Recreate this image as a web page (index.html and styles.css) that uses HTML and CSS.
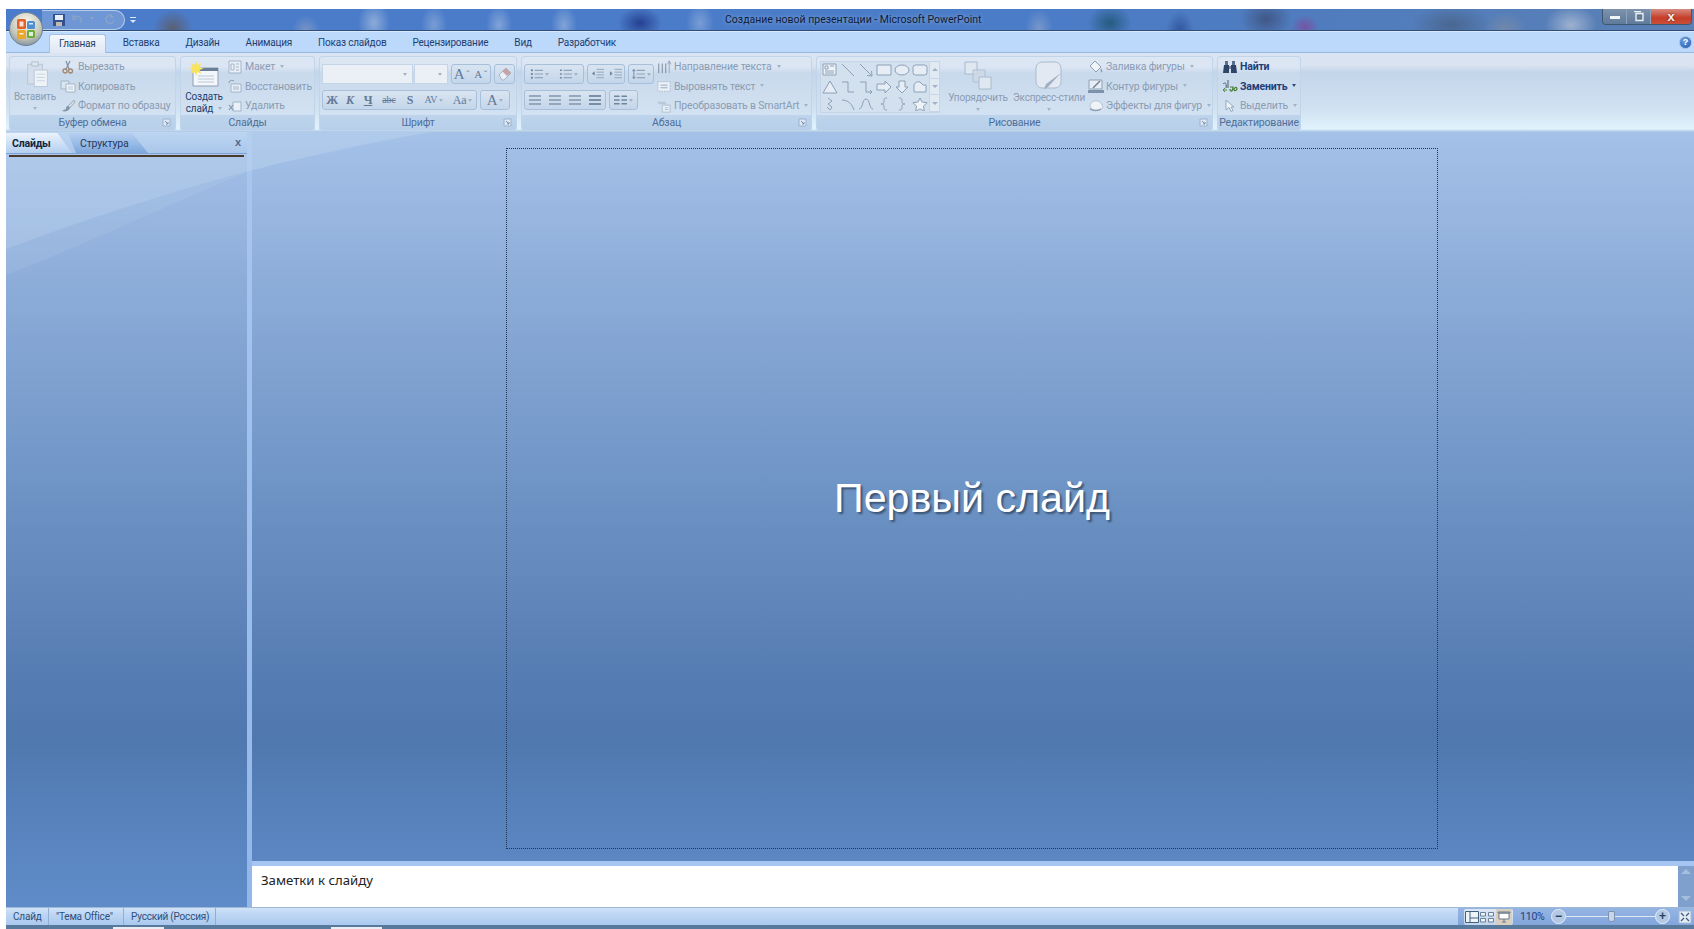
FILE: index.html
```html
<!DOCTYPE html>
<html lang="ru">
<head>
<meta charset="utf-8">
<title>Создание новой презентации - Microsoft PowerPoint</title>
<link rel="stylesheet" href="styles.css">
</head>
<body>
<svg class="defs" width="0" height="0" aria-hidden="true">
  <symbol id="lines" viewBox="0 0 14 12"><path d="M1 2h12M1 6h12M1 10h12" fill="none" stroke="currentColor" stroke-width="1.4"/></symbol>
  <symbol id="launcher" viewBox="0 0 9 9"><path d="M1 1h7v7h-7z" fill="#dce8f6" stroke="#9db2cc"/><path d="M3 3l3 3M6 4v2h-2" fill="none" stroke="#7d93ae"/></symbol>
</svg>

<div class="window">
  <header class="titlebar">
    <div class="orb">
      <svg viewBox="0 0 34 34" width="34" height="34">
        <defs>
          <radialGradient id="orbFill" cx="50%" cy="30%" r="70%"><stop offset="0" stop-color="#fbf8ef"/><stop offset=".65" stop-color="#c9cabb"/><stop offset="1" stop-color="#8a979e"/></radialGradient>
        </defs>
        <circle cx="17" cy="17" r="16.500" fill="url(#orbFill)" stroke="#6b8196"/>
        <rect x="8" y="7" width="9" height="10" rx="1.500" fill="#e2622a"/>
        <rect x="18" y="9" width="8" height="8" rx="1.500" fill="#4f8fd0"/>
        <rect x="8" y="18" width="9" height="9" rx="1.500" fill="#eba72b"/>
        <rect x="18" y="18" width="8" height="8" rx="1.500" fill="#6fae3c"/>
        <path d="M10.500 9.500h4v5h-4zM20 20h4v4h-4zM20 11h4v1.500h-4zM10.500 21h4v1.500h-4z" fill="#fff" opacity=".8"/>
      </svg>
    </div>
    <div class="qat">
      <svg viewBox="0 0 12 12" width="12" height="12"><path d="M0 0h12v12h-12z" fill="#33508f"/><path d="M2 1h8v5h-8z" fill="#e6eef8"/><path d="M3 8h6v4h-6z" fill="#c4b9b0"/></svg>
      <svg class="qat-undo" viewBox="0 0 12 12" width="12" height="12"><path d="M3 3c4-2 8 0 7 6M2 1v4h4" fill="none" stroke="#8aa4c8" stroke-width="1.400"/></svg>
      <span class="qat-caret"></span>
      <svg class="qat-redo" viewBox="0 0 12 12" width="12" height="12"><path d="M10 6a4 4 0 1 1-2-4M7 0v3h3" fill="none" stroke="#8aa4c8" stroke-width="1.400"/></svg>
    </div>
    <span class="qat-more"></span>
    <h1 class="doc-title">Создание новой презентации - Microsoft PowerPoint</h1>
    <div class="win-buttons">
      <span class="win-btn win-min"><i></i></span>
      <span class="win-btn win-max"><svg viewBox="0 0 11 11" width="11" height="11"><path d="M3 2.500h7v7h-7z M1 .5h7" fill="none" stroke="#e8eef5" stroke-width="1.400"/><path d="M5 4.500h3v3h-3z" fill="none" stroke="#5d7084"/></svg></span>
      <span class="win-btn win-close">x</span>
    </div>
  </header>

  <nav class="tabs">
    <span class="tab tab-active">Главная</span>
    <span class="tab">Вставка</span>
    <span class="tab">Дизайн</span>
    <span class="tab">Анимация</span>
    <span class="tab">Показ слайдов</span>
    <span class="tab">Рецензирование</span>
    <span class="tab">Вид</span>
    <span class="tab">Разработчик</span>
    <span class="help">?</span>
  </nav>

  <section class="ribbon">
    <div class="group g-clip">
      <div class="group-body">
        <div class="big big-paste">
          <svg viewBox="0 0 30 34" width="25" height="28"><path d="M3 4h18v24h-18z" fill="#d5dfeb" stroke="#b3c2d4"/><path d="M8 1h8v5h-8z" fill="#dde5ee" stroke="#aab9cb"/><path d="M11 11h16v20h-16z" fill="#eef3f8" stroke="#b3c2d4"/><path d="M14 16h10M14 20h10M14 24h10" stroke="#c3cfdd"/></svg>
          <span class="big-label">Вставить</span>
          <span class="caret"></span>
        </div>
        <div class="rows">
          <div class="row"><svg viewBox="0 0 14 14"><path d="M5 1l3 8M9 1l-4 8" stroke="#8494a8" stroke-width="1.300" fill="none"/><circle cx="4" cy="11" r="2" fill="none" stroke="#a2876f" stroke-width="1.300"/><circle cx="9.500" cy="11" r="2" fill="none" stroke="#a2876f" stroke-width="1.300"/></svg><span>Вырезать</span></div>
          <div class="row"><svg viewBox="0 0 16 14"><path d="M1 2h8v8h-8z" fill="#dbe5f0" stroke="#a3b4c8"/><path d="M6 5h9v8h-9z" fill="#eff4f9" stroke="#a3b4c8"/><path d="M8 8h5M8 10h5" stroke="#b9c6d6"/></svg><span>Копировать</span></div>
          <div class="row"><svg viewBox="0 0 16 14"><path d="M14 1l-6 6 2 2 5-6z" fill="#d2dbe6" stroke="#9dacbf"/><path d="M8 7c-2 0-2 2-2 3l-4 2c3 1 7 0 8-3z" fill="#8494a8"/></svg><span>Формат по образцу</span></div>
        </div>
      </div>
      <div class="group-label">Буфер обмена<svg class="launch" viewBox="0 0 9 9"><use href="#launcher"/></svg></div>
    </div>

    <div class="group g-slides">
      <div class="group-body">
        <div class="big big-new">
          <svg viewBox="0 0 30 26" width="30" height="26"><path d="M4 7h25v18h-25z" fill="#f3f6fa" stroke="#8f9fb2"/><path d="M4 7h25v3h-25z" fill="#6a7f96"/><path d="M9 15h16M9 18h16M9 21h16" stroke="#bcc9d8"/><path d="M7 0l1.500 4 4-2-2 4 4 1.500-4 1.500 2 4-4-2-1.500 4-1.500-4-4 2 2-4-3-1.500 3-1.500-2-4 4 2z" fill="#f7e45c"/></svg>
          <span class="big-label strong">Создать<br>слайд<i class="caret inline"></i></span>
        </div>
        <div class="rows">
          <div class="row"><svg viewBox="0 0 14 14"><path d="M1 1h12v12h-12z" fill="#eaf0f7" stroke="#a3b4c8"/><path d="M3 4h3v6h-3zM8 4h3M8 7h3M8 10h3" fill="none" stroke="#a3b4c8"/></svg><span>Макет<i class="caret inline"></i></span></div>
          <div class="row"><svg viewBox="0 0 14 14"><path d="M3 5h10v8h-10z" fill="#eaf0f7" stroke="#a3b4c8"/><path d="M5 8h6M5 10h6" stroke="#a3b4c8"/><path d="M1 4c0-3 3-3 5-2" fill="none" stroke="#8494a8"/></svg><span>Восстановить</span></div>
          <div class="row"><svg viewBox="0 0 14 14"><path d="M5 3h8v9h-8z" fill="#eaf0f7" stroke="#a3b4c8"/><path d="M1 6l4 5M5 6l-4 5" stroke="#8494a8" stroke-width="1.200"/></svg><span>Удалить</span></div>
        </div>
      </div>
      <div class="group-label">Слайды</div>
    </div>

    <div class="group g-font">
      <div class="group-body stack">
        <div class="tool-row">
          <span class="combo c-font"><i class="caret"></i></span>
          <span class="combo c-size"><i class="caret"></i></span>
          <span class="btn-set">
            <span class="tool f-serif wide">A<sup>ˆ</sup></span><span class="tool f-serif small wide">A<sup>ˇ</sup></span>
          </span>
          <span class="btn-set">
            <span class="tool tight"><svg viewBox="0 0 16 14" width="16" height="14"><path d="M2 8l7-7 5 5-7 7H5z" fill="#eaf0f7" stroke="#a3b4c8"/><path d="M9 1l5 5-4 3-5-5z" fill="#c7a3a8"/></svg></span>
          </span>
        </div>
        <div class="tool-row">
          <span class="btn-set">
            <span class="tool f-serif bold">Ж</span><span class="tool f-serif ital">К</span><span class="tool f-serif under">Ч</span><span class="tool f-serif strike">abc</span><span class="tool f-serif bold">S</span><span class="tool f-serif spacing">AV<i class="caret"></i></span><span class="tool f-serif aa">Aa<i class="caret"></i></span>
          </span>
          <span class="btn-set">
            <span class="tool f-serif color">A<i class="caret"></i></span>
          </span>
        </div>
      </div>
      <div class="group-label">Шрифт<svg class="launch" viewBox="0 0 9 9"><use href="#launcher"/></svg></div>
    </div>

    <div class="group g-para">
      <div class="group-body">
        <div class="stack">
          <div class="tool-row">
            <span class="btn-set">
              <span class="tool list"><svg viewBox="0 0 14 12" width="13" height="12"><path d="M5 2h9M5 6h9M5 10h9" stroke="#8fa3bb" stroke-width="1.300"/><path d="M1 2h2M1 6h2M1 10h2" stroke="#6d879f" stroke-width="2"/></svg><i class="caret"></i></span>
              <span class="tool list"><svg viewBox="0 0 14 12" width="13" height="12"><path d="M5 2h9M5 6h9M5 10h9" stroke="#8fa3bb" stroke-width="1.300"/><path d="M1 2h2M1 6h2M1 10h2" stroke="#6d879f" stroke-width="1.500"/></svg><i class="caret"></i></span>
            </span>
            <span class="btn-set">
              <span class="tool indent"><svg viewBox="0 0 14 12" width="13" height="12"><path d="M6 1h8M6 4h8M6 7h8M6 10h8" stroke="#8fa3bb"/><path d="M4 3L1 5.500 4 8z" fill="#6d879f"/></svg></span>
              <span class="tool indent"><svg viewBox="0 0 14 12" width="13" height="12"><path d="M6 1h8M6 4h8M6 7h8M6 10h8" stroke="#8fa3bb"/><path d="M1 3l3 2.500-3 2.500z" fill="#6d879f"/></svg></span>
            </span>
            <span class="btn-set">
              <span class="tool list-s"><svg viewBox="0 0 14 12" width="13" height="12"><path d="M5 2h9M5 6h9M5 10h9" stroke="#8fa3bb" stroke-width="1.300"/><path d="M2 1v10M.5 3L2 1l1.500 2M.5 9L2 11l1.500-2" fill="none" stroke="#6d879f"/></svg><i class="caret"></i></span>
            </span>
          </div>
          <div class="tool-row">
            <span class="btn-set">
              <span class="tool align"><svg width="14" height="12" class="glyph-soft"><use href="#lines"/></svg></span>
              <span class="tool align"><svg width="14" height="12" class="glyph-soft"><use href="#lines"/></svg></span>
              <span class="tool align"><svg width="14" height="12" class="glyph-soft"><use href="#lines"/></svg></span>
              <span class="tool align"><svg width="14" height="12" class="glyph-dark"><use href="#lines"/></svg></span>
            </span>
            <span class="btn-set">
              <span class="tool cols"><svg viewBox="0 0 14 12" width="13" height="12"><path d="M0 2h6M0 6h6M0 10h6M8 2h6M8 6h6M8 10h6" stroke="#6d879f" stroke-width="1.500"/></svg><i class="caret"></i></span>
            </span>
          </div>
        </div>
        <div class="rows rows-tight">
          <div class="row"><svg viewBox="0 0 16 16"><path d="M2 4v11M6 4v11M10 4v11" stroke="#6d7f95" fill="none"/><path d="M14 1l-2 4M14 1l2 4M14 1v14" stroke="#8fa3bb" fill="none"/></svg><span>Направление текста<i class="caret inline"></i></span></div>
          <div class="row"><svg viewBox="0 0 16 16"><path d="M1 3h14v11h-14z" fill="#eaf0f7" stroke="#a9bacd" stroke-dasharray="2 1"/><path d="M4 7h8M4 10h8" stroke="#8fa3bb"/></svg><span>Выровнять текст<i class="caret inline"></i></span></div>
          <div class="row"><svg viewBox="0 0 16 16"><path d="M0 3h9l2 3H2z" fill="#b9c7d8"/><path d="M6 7h9v8H6z" fill="#eaf0f7" stroke="#a9bacd"/><path d="M9 10h4M9 12h4" stroke="#a9bacd"/></svg><span>Преобразовать в SmartArt<i class="caret inline"></i></span></div>
        </div>
      </div>
      <div class="group-label">Абзац<svg class="launch" viewBox="0 0 9 9"><use href="#launcher"/></svg></div>
    </div>

    <div class="group g-draw">
      <div class="group-body">
        <div class="gallery">
          <div class="shapes">
            <svg viewBox="0 0 16 14"><path d="M1 1h13v11H1z" fill="#eef3f8"/><path d="M3 3h3v3H3zM8 3h4M3 8h9M3 10h9" fill="none"/></svg>
            <svg viewBox="0 0 16 14"><path d="M2 1l12 12"/></svg>
            <svg viewBox="0 0 16 14"><path d="M2 1l12 12M9 12.500l5 .5-.5-5" /></svg>
            <svg viewBox="0 0 16 14"><path d="M1 2h14v10H1z" fill="#e6edf5"/></svg>
            <svg viewBox="0 0 16 14"><ellipse cx="8" cy="7" rx="7" ry="5" fill="#e6edf5"/></svg>
            <svg viewBox="0 0 16 14"><rect x="1" y="2" width="14" height="10" rx="2.500" fill="#e6edf5"/></svg>
            <svg viewBox="0 0 16 14"><path d="M8 1l7 12H1z" fill="#e6edf5"/></svg>
            <svg viewBox="0 0 16 14"><path d="M2 2h6v10h6"/></svg>
            <svg viewBox="0 0 16 14"><path d="M2 2h6v10h6M12 10l2 2-2 2"/></svg>
            <svg viewBox="0 0 16 14"><path d="M1 4h8V1l6 6-6 6v-3H1z" fill="#e6edf5"/></svg>
            <svg viewBox="0 0 16 14"><path d="M5 1h6v6h3l-6 6-6-6h3z" fill="#e6edf5"/></svg>
            <svg viewBox="0 0 16 14"><path d="M2 12V6c0-3 3-5 6-4l3 3h3v7z" fill="#e6edf5"/></svg>
            <svg viewBox="0 0 16 14"><path d="M6 1l4 3-4 3 4 3-2 3-3-3"/></svg>
            <svg viewBox="0 0 16 14"><path d="M2 3c6 0 10 4 12 10"/></svg>
            <svg viewBox="0 0 16 14"><path d="M1 12C5 12 4 2 8 2s3 10 7 10"/></svg>
            <svg viewBox="0 0 16 14"><path d="M11 1c-3 0-3 1-3 3s0 3-3 3c3 0 3 1 3 3s0 3 3 3"/></svg>
            <svg viewBox="0 0 16 14"><path d="M5 1c3 0 3 1 3 3s0 3 3 3c-3 0-3 1-3 3s0 3-3 3"/></svg>
            <svg viewBox="0 0 16 14"><path d="M8 1l2 4 5 .7-3.500 3.500.8 5L8 12l-4.300 2.200.8-5L1 5.700 6 5z" fill="#eef3f8"/></svg>
          </div>
          <div class="gallery-scroll"><i class="up"></i><i class="down"></i><i class="more"></i></div>
        </div>
        <div class="big big-arrange">
          <svg viewBox="0 0 28 30" width="28" height="30"><path d="M1 1h12v12H1z" fill="#dfe7f1" stroke="#a9bacd"/><path d="M9 9h12v12H9z" fill="#ced9e7" stroke="#a9bacd" opacity=".8"/><path d="M15 16h12v12H15z" fill="#dfe7f1" stroke="#a9bacd"/></svg>
          <span class="big-label">Упорядочить</span>
          <span class="caret"></span>
        </div>
        <div class="big big-styles">
          <svg viewBox="0 0 28 30" width="28" height="30"><rect x="1" y="1" width="25" height="26" rx="6" fill="#e2e9f2" stroke="#aabbcd"/><path d="M26 12L12 27l-3 1 2-5z" fill="#a0afc2"/></svg>
          <span class="big-label">Экспресс-стили</span>
          <span class="caret"></span>
        </div>
        <div class="rows rows-tight">
          <div class="row"><svg viewBox="0 0 16 14"><path d="M7 1l6 6-5 5-6-6z" fill="#f0f4f8" stroke="#8fa0b4"/><path d="M13 8c1 2 2 3 1 4s-2-1-1-4z" fill="#8fa0b4"/></svg><span>Заливка фигуры<i class="caret inline"></i></span></div>
          <div class="row"><svg viewBox="0 0 16 14"><path d="M1 1h13v9H1z" fill="#e6edf5" stroke="#8fa0b4"/><path d="M5 9l7-7" stroke="#6f8196" stroke-width="1.500"/><path d="M0 11h16v3H0z" fill="#7d92ab"/></svg><span>Контур фигуры<i class="caret inline"></i></span></div>
          <div class="row"><svg viewBox="0 0 16 14"><path d="M3 9a5 4 0 0 1 10-5l2 4c-3 4-9 5-12 1z" fill="#eef3f8" stroke="#b4c2d2"/><path d="M2 10c3 2 8 2 11 0" stroke="#8a9bb0" stroke-width="1.500" fill="none"/></svg><span>Эффекты для фигур<i class="caret inline"></i></span></div>
        </div>
      </div>
      <div class="group-label">Рисование<svg class="launch" viewBox="0 0 9 9"><use href="#launcher"/></svg></div>
    </div>

    <div class="group g-edit">
      <div class="group-body">
        <div class="rows rows-edit">
          <div class="row on"><svg viewBox="0 0 16 14"><path d="M3 1h3v4H3zM10 1h3v4h-3z" fill="#5c6f8a"/><path d="M2 5h5v8H1zM9 5h5l1 8H9z" fill="#2e4468"/><path d="M7 6h2v3H7z" fill="#7d8ea5"/></svg><span>Найти</span></div>
          <div class="row on"><svg viewBox="0 0 16 14"><path d="M1 5c2-2 4-1 3 4M6 1v8" fill="none" stroke="#4a5a70"/><path d="M1 11h4M3 9l-2 2 2 2" fill="none" stroke="#4a8c3a"/><path d="M8 8h3c0 5-3 5-3 2M12 10c2-3 3-1 3 0s-3 3-3 0" fill="none" stroke="#3f7d32" stroke-width="1.200"/></svg><span>Заменить<i class="caret inline dark"></i></span></div>
          <div class="row"><svg viewBox="0 0 16 14"><path d="M4 1v10l3-2.500 2 4 2-1-2-3.500h3z" fill="#eef3f8" stroke="#95a7bc"/></svg><span>Выделить<i class="caret inline"></i></span></div>
        </div>
      </div>
      <div class="group-label">Редактирование</div>
    </div>
  </section>

  <main class="workspace">
    <svg class="swoosh" viewBox="0 0 1000 200" width="1000" height="200">
      <path d="M0 0H425C330 15 290 27 241 40C160 74 97 105 0 143z" fill="#c8dcf4" opacity=".14"/>
      <path d="M0 0H425C340 16 290 27 235 41C166 60 97 81 0 117z" fill="#c8dcf4" opacity=".26"/>
    </svg>
    <aside class="side-pane">
      <div class="pane-tabs">
        <span class="pane-tab pane-tab-on">Слайды</span>
        <span class="pane-tab pane-tab-off">Структура</span>
        <span class="pane-close">x</span>
      </div>
      <div class="pane-rule"></div>
    </aside>
    <div class="splitter"></div>
    <div class="editor">
      <div class="slide-area">
        <div class="slide"><span class="slide-title">Первый слайд</span></div>
      </div>
      <div class="notes">
        <div class="notes-text">Заметки к слайду</div>
        <div class="notes-scroll"><i class="up"></i><i class="down"></i></div>
      </div>
    </div>
  </main>

  <footer class="status">
    <span class="status-cell c1">Слайд</span>
    <span class="status-cell c2">"Тема Office"</span>
    <span class="status-cell c3">Русский (Россия)</span>
    <div class="status-right">
      <div class="views">
        <svg viewBox="0 0 14 12" width="14" height="12"><path d="M.5.500h13v11H.5z" fill="#eef3f8" stroke="#44607f" stroke-width="1"/><path d="M5 .5v11M5 7h8" stroke="#44607f"/></svg>
        <svg viewBox="0 0 14 12" width="14" height="12"><path d="M.5 1.500h5v3.500h-5zM8.500 1.500h5v3.500h-5zM.5 7.500h5v3.500h-5zM8.500 7.500h5v3.500h-5z" fill="#eef3f8" stroke="#6a8098"/></svg>
        <span class="view-on"><svg viewBox="0 0 14 12" width="14" height="12"><path d="M1 1h12v1H1zM2 2h10v6H2z" fill="#fff" stroke="#6a7a88"/><path d="M7 8v3M5 11h4" stroke="#6a7a88"/></svg></span>
      </div>
      <span class="zoom-pct">110%</span>
      <span class="zoom-btn">−</span>
      <span class="zoom-track"><i class="zoom-thumb"></i></span>
      <span class="zoom-btn">+</span>
      <span class="fit"><svg viewBox="0 0 14 14" width="14" height="14"><path d="M1 1h12v12H1z" fill="#e4ecf6" stroke="#a8bdd6"/><path d="M3 3l3 3M11 3L8 6M3 11l3-3M11 11L8 8" stroke="#445f80" stroke-width="1.400"/></svg></span>
    </div>
  </footer>
  <div class="task-strip"><i class="s1"></i><i class="s2"></i></div>
</div>
</body>
</html>
```

FILE: styles.css
```css
* { box-sizing: border-box; }
html, body { margin: 0; height: 100%; }
body {
  width: 1694px;
  height: 929px;
  padding: 9px 0 0 6px;
  background: #fff;
  overflow: hidden;
  font: 10.5px Roboto, "Noto Sans", "Liberation Sans", sans-serif;
  letter-spacing: -.18px;
  color: #8a9cb3;
}
.defs { position: absolute; }
i { font-style: normal; }

.window { display: flex; flex-direction: column; height: 920px; position: relative; }

/* Title bar: glass frame with the blurred desktop showing through */
.titlebar {
  height: 22px;
  flex: none;
  display: flex;
  align-items: center;
  position: relative;
  background:
    radial-gradient(ellipse 20px 20px at 167px 20px, rgba(95,85,85,.75), transparent),
    radial-gradient(ellipse 14px 16px at 300px 22px, rgba(140,160,195,.7), transparent),
    radial-gradient(ellipse 16px 22px at 368px 14px, rgba(175,195,225,.65), transparent),
    radial-gradient(ellipse 13px 20px at 428px 16px, rgba(160,185,220,.55), transparent),
    radial-gradient(ellipse 13px 20px at 493px 16px, rgba(165,190,225,.6), transparent),
    radial-gradient(ellipse 13px 20px at 558px 16px, rgba(165,190,225,.6), transparent),
    radial-gradient(ellipse 22px 16px at 634px 14px, rgba(25,45,125,.75), transparent),
    radial-gradient(ellipse 14px 20px at 694px 14px, rgba(165,190,225,.5), transparent),
    radial-gradient(ellipse 14px 20px at 1033px 20px, rgba(150,170,205,.6), transparent),
    radial-gradient(ellipse 22px 18px at 1104px 14px, rgba(25,80,105,.75), transparent),
    radial-gradient(ellipse 14px 20px at 1174px 22px, rgba(30,60,130,.6), transparent),
    radial-gradient(ellipse 26px 20px at 1260px 10px, rgba(60,75,115,.75), transparent),
    radial-gradient(ellipse 14px 12px at 1299px 18px, rgba(150,50,140,.55), transparent),
    radial-gradient(ellipse 40px 20px at 1445px 16px, rgba(70,95,130,.75), transparent),
    radial-gradient(ellipse 22px 18px at 1499px 20px, rgba(125,140,165,.7), transparent),
    radial-gradient(ellipse 26px 20px at 1565px 16px, rgba(175,190,215,.8), transparent),
    linear-gradient(90deg, #4b7ccb, #4b7cc8 60%, #4f7cc0 75%, #5a80b4);
  border-bottom: 1px solid #2f4d77;
}
.orb {
  position: absolute;
  left: 3px;
  top: 3px;
  z-index: 3;
  width: 34px;
  height: 34px;
}
.qat {
  margin-left: 36px;
  height: 20px;
  width: 83px;
  display: flex;
  align-items: center;
  padding-left: 11px;
  background: rgba(205, 222, 245, .28);
  border: 1px solid #b6cbe6;
  border-left: 0;
  border-radius: 0 11px 11px 0;
}
.qat-undo { margin-left: 6px; }
.qat-caret { width: 0; height: 0; margin: 0 7px; border: 2px solid transparent; border-top: 3px solid #8aa4c8; }
.qat-redo { margin-left: 3px; }
.qat-more { margin-left: 5px; width: 6px; height: 5px; border-top: 1px solid #dce7f5; position: relative; }
.qat-more::after { content: ""; position: absolute; left: 0; top: 2px; border: 3px solid transparent; border-top-color: #dce7f5; }
.doc-title {
  position: absolute;
  left: 719px;
  top: 3px;
  margin: 0;
  font: 400 10.500px/16px Roboto, "Noto Sans", sans-serif;
  letter-spacing: 0;
  color: #0d1d38;
  text-shadow: 0 0 4px rgba(255,255,255,.4);
  white-space: nowrap;
}
.win-buttons {
  margin-left: auto;
  margin-right: 2px;
  align-self: flex-start;
  display: flex;
  height: 16px;
  border: 1px solid #3f5670;
  border-top: 0;
  border-radius: 0 0 4px 4px;
  overflow: hidden;
}
.win-btn { display: flex; align-items: center; justify-content: center; height: 100%; }
.win-min, .win-max { width: 24px; background: linear-gradient(#7d92ac, #5f7a9a); border-right: 1px solid #8ea3bd; }
.win-min i { width: 10px; height: 3px; background: #f0f4f8; margin-top: 2px; }
.win-close {
  width: 40px;
  background: linear-gradient(#d68b80, #c63c28 60%, #c85038);
  color: #f0f0ee;
  font: 700 13px/12px "Liberation Sans", sans-serif;
  text-shadow: 0 0 2px #6a2015;
}

/* Ribbon tabs */
.tabs {
  height: 21px;
  flex: none;
  display: flex;
  align-items: flex-end;
  padding-left: 39px;
  background: #bcd8fa;
  position: relative;
  border-top: 1px solid #d9e9fd;
  font-size: 10px;
  letter-spacing: -.2px;
}
.tab {
  height: 19px;
  padding: 0 13px;
  line-height: 20px;
  color: #1e3f72;
  white-space: nowrap;
}
.tab-active {
  margin: 0 4px;
  padding: 0 9px;
  color: #243f66;
  background: linear-gradient(#f4f8fd, #dfe7f3);
  border: 1px solid #a6c2e4;
  border-bottom: 0;
  border-radius: 3px 3px 0 0;
  line-height: 18px;
  position: relative;
  top: 1px;
}
.help {
  position: absolute;
  right: 2px;
  top: 4px;
  width: 13px;
  height: 13px;
  border-radius: 50%;
  background: radial-gradient(circle at 40% 30%, #6fa3e8, #1c56a8);
  border: 1px solid #9fbde2;
  color: #fff;
  font: 700 9px/11px "Liberation Sans", sans-serif;
  text-align: center;
}

/* Ribbon body */
.ribbon {
  height: 80px;
  flex: none;
  display: flex;
  gap: 4px;
  padding: 3px 0 1px 3px;
  background: linear-gradient(#dbe4f2 0, #d9e3f1 16%, #c3d5ea 24%, #d0e1f2 70%, #e0f3fb 96%, #a9c4e4 100%);
  border-top: 1px solid #97b7de;
}
.group {
  display: flex;
  flex-direction: column;
  border: 1px solid #c0d4ea;
  border-radius: 3px;
  background: linear-gradient(#dde6f3 0, #dbe5f3 14%, #c8d9ec 22%, #d3e2f2 80%);
  overflow: hidden;
}
.group-body { flex: 1; display: flex; min-height: 0; }
.group-label {
  height: 15px;
  flex: none;
  position: relative;
  text-align: center;
  line-height: 16px;
  color: #4f6f99;
  background: linear-gradient(#bed4ec, #b7cfea);
}
.launch { position: absolute; right: 4px; top: 3px; width: 9px; height: 9px; }
.g-clip { width: 167px; }
.g-slides { width: 135px; }
.g-font { width: 198px; }
.g-para { width: 291px; }
.g-draw { width: 397px; }
.g-edit { width: 84px; }

.big {
  flex: none;
  display: flex;
  flex-direction: column;
  align-items: center;
  padding-top: 4px;
  line-height: 12px;
  white-space: nowrap;
}
.big-label { text-align: center; font-size: 10px; }
.big-paste { width: 50px; }
.big-paste .big-label { margin-top: 2px; }
.big-paste svg { margin-left: 4px; }
.big-new { width: 46px; }
.big-new svg { margin-bottom: 4px; }
.big-label.strong { color: #21416f; line-height: 12px; }
.big-arrange { width: 68px; margin-left: 4px; }
.big-styles { width: 74px; }
.big-arrange .big-label, .big-styles .big-label { margin-top: 1px; }
.big .caret { margin-top: 4px; }

.caret {
  display: inline-block;
  width: 0;
  height: 0;
  border: 2.500px solid transparent;
  border-top: 3px solid #a3b3c6;
  border-bottom: 0;
}
.caret.inline { margin: 0 0 2px 5px; vertical-align: middle; }
.caret.dark { border-top-color: #2d4b78; }

.rows {
  display: flex;
  flex-direction: column;
  white-space: nowrap;
}
.row { display: flex; align-items: center; gap: 2px; height: 19.500px; flex: none; }
.row svg { flex: none; width: 16px; height: 14px; }
.rows-tight { margin-left: 2px; }
.rows-edit { padding-left: 4px; }
.row.on { color: #1f3f78; font-weight: 700; }

/* Font and paragraph tool rows */
.stack { display: flex; flex-direction: column; gap: 6px; padding: 7px 0 0 2px; }
.tool-row { display: flex; gap: 3px; height: 20px; flex: none; }
.combo {
  height: 20px;
  background: #ebf0f6;
  border: 1px solid #c5d5e8;
  position: relative;
}
.combo .caret { position: absolute; right: 5px; top: 8px; }
.c-font { width: 91px; }
.c-size { width: 34px; margin-left: -2px; }
.btn-set {
  display: flex;
  height: 20px;
  border: 1px solid #a8bfda;
  border-radius: 3px;
  background: linear-gradient(#d9e4f1, #c4d6ea);
  overflow: hidden;
}
.tool {
  height: 100%;
  min-width: 18px;
  display: flex;
  align-items: center;
  justify-content: center;
  gap: 2px;
  color: #627a98;
}
.f-serif { font: 700 12px/1 "Liberation Serif", serif; }
.f-serif sup { font-size: 9px; line-height: 0; }
.tool.wide { width: 19px; font-size: 15px; font-weight: 400; }
.tool.small { font-size: 11px; }
.tool.tight { width: 19px; }
.tool.ital { font-style: italic; }
.tool.under { text-decoration: underline; }
.tool.strike { font-size: 10px; text-decoration: line-through; font-weight: 400; width: 24px; }
.tool.spacing { width: 30px; font-size: 10px; font-weight: 400; }
.tool.aa { width: 27px; font-weight: 400; }
.tool.color { width: 28px; font-size: 15px; font-weight: 400; }
.tool.list { width: 29px; }
.tool.indent { width: 18px; }
.tool.list-s { width: 24px; }
.tool.align { width: 20px; }
.tool.cols { width: 27px; }
.tool .caret { flex: none; }
.glyph-soft { color: #8195ad; }
.glyph-dark { color: #5d7590; }

/* Shape gallery */
.gallery {
  flex: none;
  width: 120px;
  height: 52px;
  margin: 4px 0 0 3px;
  display: flex;
  background: #d3e0ee;
  border: 1px solid #c6d6e8;
}
.shapes { flex: 1; display: grid; grid-template-columns: repeat(6, 18px); grid-auto-rows: 17px; }
.shapes svg { width: 16px; height: 14px; margin: 1px; fill: none; stroke: #8ba0b8; stroke-width: 1; }
.gallery-scroll { width: 11px; display: flex; flex-direction: column; border-left: 1px solid #c6d6e8; }
.gallery-scroll i {
  flex: 1;
  background: #e1e9f3;
  border-bottom: 1px solid #c6d6e8;
  display: flex;
  align-items: center;
  justify-content: center;
}
.gallery-scroll i::after, .notes-scroll i::after {
  content: "";
  width: 0;
  height: 0;
  border: 3px solid transparent;
}
.gallery-scroll .up::after { border-bottom: 3px solid #9fb2c8; border-top: 0; }
.gallery-scroll .down::after, .gallery-scroll .more::after { border-top: 3px solid #9fb2c8; border-bottom: 0; }

/* Workspace */
.workspace {
  flex: 1;
  min-height: 0;
  display: flex;
  position: relative;
  background: linear-gradient(#a4c1e8 0, #8aaad7 22%, #6c92c4 48%, #5a80b6 66%, #4f78ae 78%, #5a85c0 92%, #5f8cc8 100%);
  overflow: hidden;
}
.swoosh { position: absolute; left: 0; top: 0; }
.side-pane { width: 241px; flex: none; position: relative; }
.pane-tabs {
  height: 22px;
  display: flex;
  align-items: flex-end;
  background: linear-gradient(rgba(190,214,243,.9), rgba(167,197,234,.6));
  border-bottom: 1px solid #7ea4d6;
  position: relative;
}
.pane-tab {
  height: 20px;
  line-height: 21px;
  color: #1f2f45;
  white-space: nowrap;
}
.pane-tab-on {
  width: 66px;
  padding-left: 6px;
  font-weight: 700;
  color: #10253f;
  background: linear-gradient(#eaf2fc, #b4cff0);
  clip-path: polygon(0 0, 78% 0, 100% 100%, 0 100%);
  position: relative;
  z-index: 1;
}
.pane-tab-off {
  width: 80px;
  margin-left: -4px;
  padding-left: 12px;
  color: #1e3a64;
  background: linear-gradient(#b5cff0, #7ea8dc);
  clip-path: polygon(0 0, 80% 0, 100% 100%, 10% 100%);
}
.pane-close { position: absolute; right: 6px; top: 3px; font: 700 11px/14px "Liberation Sans", sans-serif; color: #4f6b90; }
.pane-rule { height: 2px; margin: 1px 3px 0; background: #4a3a2e; }
.splitter { width: 5px; flex: none; background: linear-gradient(#a9c6ef, #93b7ea); }
.editor { flex: 1; min-width: 0; display: flex; flex-direction: column; position: relative; }
.slide-area { flex: 1; min-height: 0; padding: 16px 0 12px 254px; }
.slide {
  width: 932px;
  height: 100%;
  border: 1px dotted #22344e;
  display: flex;
  align-items: center;
  justify-content: center;
}
.slide-title {
  font: 41.200px/1 "Liberation Sans", sans-serif;
  letter-spacing: 0;
  color: #fff;
  text-shadow: 2px 2px 2px rgba(25, 40, 60, .6);
}
.notes {
  height: 46px;
  flex: none;
  display: flex;
  border-top: 5px solid #a5c6f2;
  background: #fff;
}
.notes-text { flex: 1; padding: 4px 0 0 9px; font: 13.200px/20px "Noto Sans", sans-serif; letter-spacing: 0; color: #222; }
.notes-scroll {
  width: 16px;
  flex: none;
  display: flex;
  flex-direction: column;
  justify-content: space-between;
  padding: 3px 0;
  background: #7f9fcd;
}
.notes-scroll i { display: flex; justify-content: center; height: 8px; }
.notes-scroll .up::after { border-bottom: 5px solid #a5bedd; border-top: 0; border-left-width: 5px; border-right-width: 5px; }
.notes-scroll .down::after { border-top: 5px solid #a5bedd; border-bottom: 0; border-left-width: 5px; border-right-width: 5px; }

/* Status bar */
.status {
  height: 18px;
  flex: none;
  display: flex;
  align-items: center;
  background: linear-gradient(#d0e2f8, #bcd5f3 40%, #abc9ef);
  border-top: 1px solid #9fb8d6;
  color: #2f4f7c;
  font-size: 10px;
  letter-spacing: -.2px;
  white-space: nowrap;
}
.status-cell { height: 100%; line-height: 18px; padding-left: 7px; border-right: 1px solid #94aed0; }
.c1 { width: 43px; }
.c2 { width: 75px; }
.c3 { width: 92px; }
.status-right {
  margin-left: auto;
  width: 236px;
  height: 100%;
  display: flex;
  align-items: center;
  padding-left: 6px;
  background: linear-gradient(#95b5e3, #82a5db);
}
.views {
  width: 49px;
  height: 16px;
  display: flex;
  align-items: center;
  justify-content: space-around;
  background: linear-gradient(#dde8f6, #c1d4ec);
  border-radius: 2px;
}
.view-on { padding: 1px 1px 0; background: #d9cfc1; height: 100%; display: flex; align-items: center; }
.zoom-pct { margin-left: 7px; font-size: 10.500px; color: #1d3f85; width: 31px; }
.zoom-btn {
  width: 15px;
  height: 15px;
  border-radius: 50%;
  border: 1px solid #e5edf8;
  background: #b3c8e5;
  color: #24405f;
  font: 700 12px/12px "Liberation Sans", sans-serif;
  text-align: center;
  flex: none;
}
.zoom-track { width: 89px; height: 1px; background: #dfe9f7; position: relative; }
.zoom-thumb {
  position: absolute;
  left: 42px;
  top: -5px;
  width: 7px;
  height: 11px;
  background: #c8d6ea;
  border: 1px solid #7d93b2;
  border-radius: 1px 1px 3px 3px;
}
.fit { margin-left: 8px; display: flex; }

.task-strip { height: 4px; flex: none; background: #56799c; position: relative; }
.task-strip i { position: absolute; top: 2px; height: 2px; background: #e9eef4; width: 51px; }
.task-strip .s1 { left: 107px; }
.task-strip .s2 { left: 325px; }
```
